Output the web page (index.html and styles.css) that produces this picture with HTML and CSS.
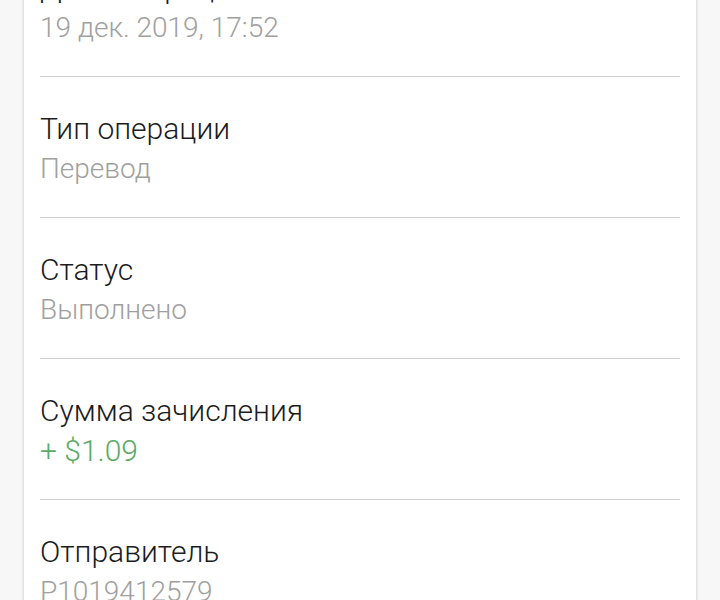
FILE: index.html
```html
<!DOCTYPE html>
<html lang="ru">
<head>
<meta charset="utf-8">
<link rel="stylesheet" href="styles.css">
</head>
<body>
<div class="page">
  <div class="card">
    <div class="item">
      <div class="label">Дата операции</div>
      <div class="value">19 дек. 2019, 17:52</div>
    </div>
    <div class="item">
      <div class="label">Тип операции</div>
      <div class="value">Перевод</div>
    </div>
    <div class="item">
      <div class="label">Статус</div>
      <div class="value">Выполнено</div>
    </div>
    <div class="item">
      <div class="label">Сумма зачисления</div>
      <div class="value green">+ $1.09</div>
    </div>
    <div class="item">
      <div class="label">Отправитель</div>
      <div class="value">P1019412579</div>
    </div>
  </div>
</div>
</body>
</html>
```
FILE: styles.css
```css
html, body {
  margin: 0;
  padding: 0;
  background: #f7f7f7;
  overflow: hidden;
}
.page {
  height: 600px;
  padding: 0 24px;
  overflow: hidden;
}
.card {
  background: #fff;
  box-shadow: 0 0 3px rgba(0, 0, 0, 0.22);
  margin-top: -64px;
  padding: 0 16px;
  font-family: Roboto, "Noto Sans", sans-serif;
  font-weight: 300;
  line-height: 40px;
}
.item {
  padding: 32px 0 28px;
  border-bottom: 1px solid #d2d2d2;
}
.label {
  font-size: 30px;
  color: #1c1c1c;
}
.value {
  font-size: 28px;
  color: #a0a0a0;
}
.value.green {
  font-size: 30px;
  color: #5aab66;
}
```
